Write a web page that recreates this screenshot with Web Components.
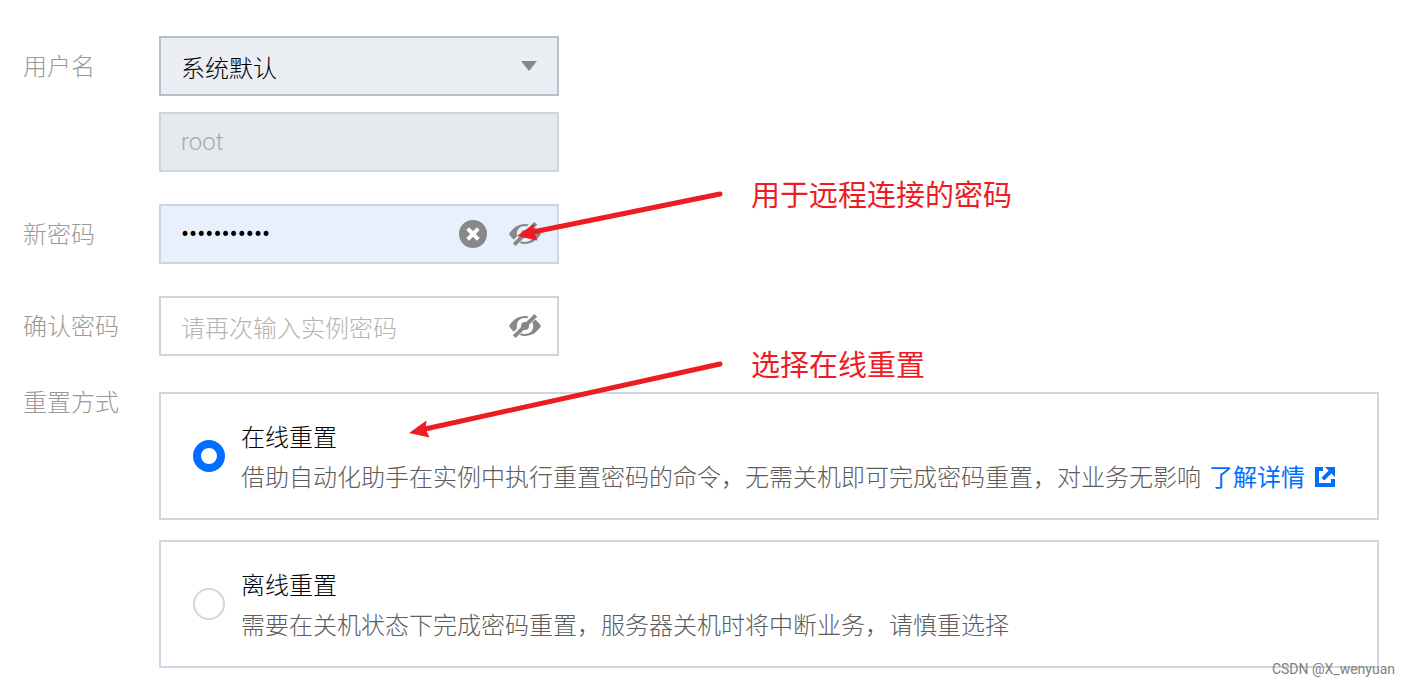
<!DOCTYPE html>
<html lang="zh-CN">
<head>
<meta charset="utf-8">
<title>重置密码</title>
<style>
  body { margin: 0; background: #fff; font-family: "Noto Sans CJK SC", sans-serif; }
</style>
</head>
<body>
<reset-page></reset-page>

<template id="field-row">
  <style>
    :host { display: grid; grid-template-columns: 136px minmax(0, 1fr); }
    .label { line-height: 58px; color: #999; }
    :host([compact]) .label { line-height: 42px; }
    .body { display: flex; flex-direction: column; gap: 16px; }
    :host([compact]) .body { gap: 20px; padding-top: 12px; }
  </style>
  <div class="label"><slot name="label"></slot></div>
  <div class="body"><slot></slot></div>
</template>

<template id="input-box">
  <style>
    :host { display: flex; align-items: center; gap: 22px; box-sizing: border-box; width: 100%; max-width: 400px;
      height: 60px; padding: 0 16px 0 20px; border: 2px solid #cfd5df; background: #fff; }
    :host([kind="select"]) { background: #ebeef3; border-color: #b4c0d0; padding-right: 20px; }
    :host([kind="disabled"]) { background: #e6e9ee; }
    :host([kind="filled"]) { background: #e8f0fe; }
    ::slotted(input), ::slotted(select) { flex: 1; }
  </style>
  <slot></slot><slot name="action"></slot>
</template>

<template id="option-card">
  <style>
    :host { display: flex; align-items: center; gap: 16px; padding: 22px 32px; border: 2px solid #cfd5e1; }
    .text { line-height: 40px; }
    .desc { color: #5c5c5c; }
  </style>
  <slot name="control"></slot>
  <div class="text">
    <div><slot name="title"></slot></div>
    <div class="desc"><slot></slot></div>
  </div>
</template>

<template id="ui-icon">
  <style>
    :host { display: block; }
    :host([name="open"]) { display: inline-block; }
    svg { display: block; }
  </style>
</template>

<template id="arrow-note">
  <style>
    :host { position: absolute; pointer-events: none; color: #ed1c24; font-family: Roboto, "Noto Sans CJK SC", sans-serif;
      font-size: 29px; font-weight: 400; line-height: 40px; display: flex; gap: 30px; }
    svg { display: block; flex: none; overflow: visible; }
  </style>
  <svg fill="none" stroke="currentColor"></svg>
  <span><slot></slot></span>
</template>

<template id="reset-page">
  <style>
    :host { display: block; position: relative; padding: 36px 31px 18px 23px; font-size: 24px; font-weight: 300; color: #000; }
    form { display: flex; flex-direction: column; }
    field-row + field-row { margin-top: 32px; }
    field-row + field-row[compact] { margin-top: 24px; }
    input, select, button { font: inherit; color: inherit; margin: 0; padding: 0; border: 0; background: none; outline: none; }
    input, select { min-width: 0; height: 56px; }
    select { appearance: none; }
    input:disabled { color: #aaa; font-family: Roboto, sans-serif; }
    input::placeholder { color: #b4b4b4; opacity: 1; }
    #password { font-family: Roboto, sans-serif; font-weight: 400; }
    button { display: block; flex: none; cursor: pointer; }
    input[type="radio"] { appearance: none; flex: none; box-sizing: border-box; width: 32px; height: 32px; border: 2px solid #cfd5e1; border-radius: 50%; background: #fff; }
    input[type="radio"]:checked { border: 8px solid #006eff; }
    a { color: #006eff; text-decoration: none; margin-left: 8px; font-weight: 400; }
    a ui-icon { margin-left: 10px; vertical-align: -1px; }
    .first { left: 517px; top: 176px; }
    .second { left: 409px; top: 346px; }
    .mark { position: absolute; right: 15px; bottom: 7px; font: 14px/20px Roboto, sans-serif; color: #808080; }
  </style>
  <form>
    <field-row>
      <label slot="label" for="account">用户名</label>
      <input-box kind="select">
        <select id="account"><option>系统默认</option></select>
        <ui-icon slot="action" name="caret"></ui-icon>
      </input-box>
      <input-box kind="disabled"><input type="text" value="root" aria-label="用户名" disabled></input-box>
    </field-row>
    <field-row>
      <label slot="label" for="password">新密码</label>
      <input-box kind="filled">
        <input id="password" type="password" value="password123" autocomplete="new-password">
        <button slot="action" type="button" aria-label="清除"><ui-icon name="clear"></ui-icon></button>
        <button slot="action" type="button" aria-label="显示密码"><ui-icon name="eye"></ui-icon></button>
      </input-box>
    </field-row>
    <field-row>
      <label slot="label" for="confirm">确认密码</label>
      <input-box>
        <input id="confirm" type="password" placeholder="请再次输入实例密码" autocomplete="new-password">
        <button slot="action" type="button" aria-label="显示密码"><ui-icon name="eye"></ui-icon></button>
      </input-box>
    </field-row>
    <field-row compact>
      <span slot="label">重置方式</span>
      <option-card>
        <input slot="control" id="online" type="radio" name="mode" checked>
        <label slot="title" for="online">在线重置</label>借助自动化助手在实例中执行重置密码的命令，无需关机即可完成密码重置，对业务无影响<a href="#details">了解详情<ui-icon name="open"></ui-icon></a>
      </option-card>
      <option-card>
        <input slot="control" id="offline" type="radio" name="mode">
        <label slot="title" for="offline">离线重置</label>需要在关机状态下完成密码重置，服务器关机时将中断业务，请慎重选择
      </option-card>
    </field-row>
  </form>
  <arrow-note class="first" length="204" drop="60">用于远程连接的密码</arrow-note>
  <arrow-note class="second" length="312" drop="87">选择在线重置</arrow-note>
  <div class="mark">CSDN @X_wenyuan</div>
</template>

<script>
  const stamp = (host, id) => {
    const root = host.attachShadow({ mode: "open" });
    root.append(document.getElementById(id).content.cloneNode(true));
    return root;
  };

  const ICONS = {
    caret: [16, 10, '<path d="M0 0h16L8 10z" fill="#888"/>'],
    clear: [28, 28, '<circle cx="14" cy="14" r="14" fill="#888"/><path d="M8.700 8.700l10.600 10.600M19.300 8.700L8.700 19.300" stroke="#fff" stroke-width="4"/>'],
    eye: [32, 24, `<mask id="gap"><path fill="#fff" d="M0 0h32v24H0z"/><path d="M3 24L27 0" stroke="#000" stroke-width="6.600"/></mask>
      <path mask="url(#gap)" fill="#888" fill-rule="evenodd" d="M0 12C4 5.500 9.500 2 16 2s12 3.500 16 10c-4 6.500-9.500 10-16 10S4 18.500 0 12zM16 4c-5 0-8.200 3.200-8.200 8s3.200 8 8.200 8 8.200-3.200 8.200-8S21 4 16 4z"/>
      <circle cx="16" cy="12" r="4" fill="#888"/><path d="M5.200 22.600L26.800 1.400" stroke="#888" stroke-width="4"/>`],
    open: [20, 20, '<path d="M0 0h8v4H4v12h12v-4h4v8H0z" fill="#006eff"/><path d="M10 0h10v10l-3.600-3.600-7.200 7.200-2.800-2.800 7.200-7.200z" fill="#006eff"/>']
  };

  customElements.define("ui-icon", class extends HTMLElement {
    connectedCallback() {
      if (this.shadowRoot) return;
      const [w, h, art] = ICONS[this.getAttribute("name")];
      const holder = document.createElement("template");
      holder.innerHTML = `<svg width="${w}" height="${h}" viewBox="0 0 ${w} ${h}" fill="none" aria-hidden="true">${art}</svg>`;
      stamp(this, "ui-icon").append(holder.content);
    }
  });

  customElements.define("arrow-note", class extends HTMLElement {
    connectedCallback() {
      if (this.shadowRoot) return;
      const w = +this.getAttribute("length"), h = +this.getAttribute("drop");
      const svg = stamp(this, "arrow-note").querySelector("svg");
      svg.setAttribute("width", w);
      svg.setAttribute("height", h);
      svg.innerHTML = `<path d="M${w - 1} 18L16 ${h - 4}" stroke-width="5" stroke-linecap="round"/>
        <path d="M0 ${h}l17.500-12.500-1 8 4 9z" fill="currentColor" stroke="none"/>`;
    }
  });

  for (const name of ["field-row", "input-box", "option-card", "reset-page"]) {
    customElements.define(name, class extends HTMLElement {
      constructor() { super(); stamp(this, name); }
    });
  }
</script>
</body>
</html>
